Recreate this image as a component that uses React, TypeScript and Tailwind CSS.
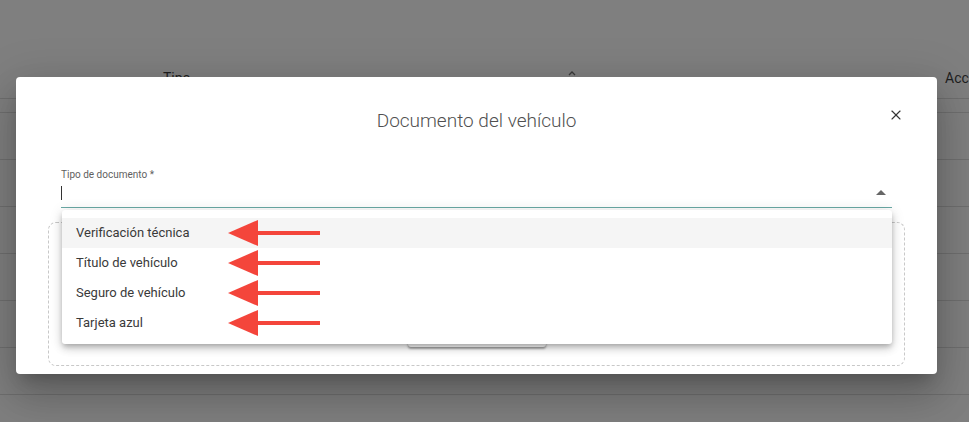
import { X } from "lucide-react";

const options = [
    "Verificación técnica",
    "Título de vehículo",
    "Seguro de vehículo",
    "Tarjeta azul",
] as const;

function RedArrow() {
    return (
        <svg width="94" height="30" viewBox="0 0 94 30" className="absolute left-[166px] top-0">
            <polygon points="0,15 30,2 30,28" fill="#f4453b" />
            <rect x="28" y="13" width="64" height="4" fill="#f4453b" />
        </svg>
    );
}

export default function App() {
    return (
        <div
            className="relative w-[969px] h-[422px] overflow-hidden bg-[#7f7f7f]"
            style={{ fontFamily: "Roboto, 'Liberation Sans', sans-serif" }}
        >
            {/* page behind the overlay */}
            <div className="pt-[60px]">
                <div className="flex items-start h-[39px] pt-[8px] border-b border-[#6f6f6f] text-[14px] text-[#1f1f1f] whitespace-nowrap">
                    <span className="ml-[163px] w-[405px]">Tipo</span>
                    <svg width="8" height="6" viewBox="0 0 8 6" className="mt-[2px] shrink-0">
                        <path d="M1 5 L4 2 L7 5" stroke="#3a3a3a" strokeWidth="1.3" fill="none" />
                    </svg>
                    <span className="ml-[369px]">Acc</span>
                </div>
                <div className="h-[14px] border-b border-[#6f6f6f]" />
                {[0, 1, 2, 3, 4, 5].map((i) => (
                    <div key={i} className="h-[47px] border-b border-[#6f6f6f]" />
                ))}
            </div>

            {/* dialog */}
            <div className="absolute left-[16px] top-[77px] w-[921px] h-[297px] bg-white rounded-[4px] shadow-[0_11px_15px_-7px_rgba(0,0,0,0.2),0_24px_38px_3px_rgba(0,0,0,0.14),0_9px_46px_8px_rgba(0,0,0,0.12)] px-[32px]">
                <div className="relative pt-[32px]">
                    <h2 className="text-center text-[19px] leading-6 font-light text-[#505050]">
                        Documento del vehículo
                    </h2>
                    <button className="absolute right-[1px] top-[30px] text-[#333]">
                        <X size={16} strokeWidth={1.7} />
                    </button>
                </div>

                {/* select */}
                <div className="relative mx-[13px] mt-[36px]">
                    <p className="text-[10px] leading-3 text-[#5f5f5f]">Tipo de documento *</p>
                    <div className="flex items-center justify-between h-[27px] pb-[2px] pr-[6px] border-b border-[#6aa9a5]">
                        <div className="w-px h-[14px] bg-[#333]" />
                        <svg width="10" height="6" viewBox="0 0 10 6">
                            <polygon points="0,5 5,0 10,5" fill="#666" />
                        </svg>
                    </div>

                    {/* open menu */}
                    <div className="absolute left-[1px] right-0 top-[41px] z-10 bg-white rounded-[3px] pt-[8px] pb-[6px] shadow-[0_3px_5px_-1px_rgba(0,0,0,0.2),0_5px_8px_0_rgba(0,0,0,0.14),0_1px_14px_0_rgba(0,0,0,0.12)]">
                        {options.map((opt, i) => (
                            <div
                                key={opt}
                                className={`relative h-[30px] flex items-center px-[14px] text-[13px] text-[#3a3a3a] ${i === 0 ? "bg-[#f5f5f5]" : ""}`}
                            >
                                {opt}
                                <RedArrow />
                            </div>
                        ))}
                    </div>
                </div>

                {/* upload area */}
                <div className="mt-[14px] h-[144px] border border-dashed border-[#c8c8c8] rounded-[8px] flex flex-col items-center justify-end pb-[18px]">
                    <button className="w-[138px] h-[36px] rounded-[3px] bg-white text-[13px] text-[#444] shadow-[0_2px_2px_0_rgba(0,0,0,0.25),0_1px_3px_0_rgba(0,0,0,0.2)]">
                        Subir archivo
                    </button>
                </div>
            </div>
        </div>
    );
}
